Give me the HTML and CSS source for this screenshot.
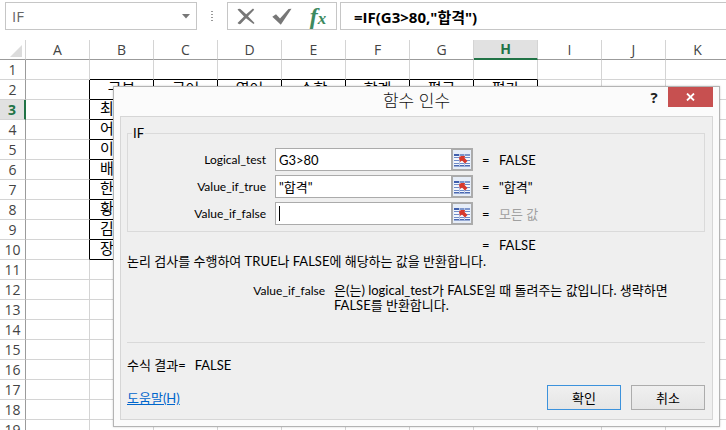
FILE: index.html
```html
<!DOCTYPE html>
<html lang="ko">
<head>
  <meta charset="UTF-8">
  <meta name="viewport" content="width=device-width, initial-scale=1.0">
  <title>함수 인수</title>
  <link rel="stylesheet" href="styles.css">
</head>
<body>
  <!-- Formula Bar -->
  <div class="formula-bar">
    <div class="name-box">
      <input type="text" value="IF" aria-label="이름 상자">
      <button type="button" aria-label="이름 목록">
        <svg width="8" height="5" viewBox="0 0 8 5"><path d="M0 0h8L4 4.500z" fill="#777"/></svg>
      </button>
    </div>
    <div class="grip"><span></span><span></span><span></span><span></span></div>
    <div class="formula-tools">
      <button type="button" aria-label="취소">
        <svg width="18" height="17" viewBox="0 0 18 17"><path d="M.500 1.500Q2.500 0 4.500 2L9.200 6.300 16 .600 17.200 1.800 11 8.200 17.500 15 16.500 16 9 10.200 3.500 16Q1.500 16.500.500 15L7 8.400z" fill="#777"/></svg>
      </button>
      <button type="button" aria-label="입력">
        <svg width="20" height="17" viewBox="0 0 20 17"><path d="M.300 8.800 4 6.200 8 10.500 16.500 1 19.500.800 8.800 16.800z" fill="#777"/></svg>
      </button>
      <button type="button" class="fx" aria-label="함수 삽입"><span class="fx-f">f</span><span class="fx-x">x</span></button>
    </div>
    <input type="text" class="formula-input" value="=IF(G3&gt;80,&quot;합격&quot;)" aria-label="수식 입력줄">
  </div>

  <!-- Sheet -->
  <div class="sheet">
    <table class="grid">
      <thead>
        <tr id="grid-head">
          <th class="corner"><svg width="12" height="12" viewBox="0 0 12 12"><path d="M12 0v12H0z" fill="#dcdcdc"/></svg></th>
        </tr>
      </thead>
      <tbody id="grid-body"></tbody>
    </table>
  </div>

  <!-- Function Arguments Dialog -->
  <form class="dialog" role="dialog" aria-labelledby="dialog-title">
    <div class="dialog-header">
      <h1 id="dialog-title">함수 인수</h1>
      <div class="window-buttons">
        <button type="button" class="help-button">?</button>
        <button type="button" class="close-button" aria-label="닫기">
          <svg width="9" height="8" viewBox="0 0 9 8"><path d="M1 .500 8 7.500M8 .500 1 7.500" stroke="#fff" stroke-width="1.800"/></svg>
        </button>
      </div>
    </div>

    <div class="dialog-body">
      <fieldset>
        <legend>IF</legend>
        <div class="arg-row">
          <label for="logical-test">Logical_test</label>
          <div class="arg-field">
            <input type="text" id="logical-test" value="G3&gt;80">
            <button type="button" aria-label="범위 선택"><svg width="16" height="14"><use href="#pick-icon"/></svg></button>
          </div>
          <span class="equals">=</span><span>FALSE</span>
        </div>
        <div class="arg-row">
          <label for="value-true">Value_if_true</label>
          <div class="arg-field">
            <input type="text" id="value-true" value="&quot;합격&quot;">
            <button type="button" aria-label="범위 선택"><svg width="16" height="14"><use href="#pick-icon"/></svg></button>
          </div>
          <span class="equals">=</span><span>"합격"</span>
        </div>
        <div class="arg-row">
          <label for="value-false">Value_if_false</label>
          <div class="arg-field">
            <span class="caret"></span>
            <input type="text" id="value-false" value="">
            <button type="button" aria-label="범위 선택"><svg width="16" height="14"><use href="#pick-icon"/></svg></button>
          </div>
          <span class="equals">=</span><span class="muted">모든 값</span>
        </div>
      </fieldset>

      <div class="arg-row total">
        <span class="equals">=</span><span>FALSE</span>
      </div>
      <p class="description">논리 검사를 수행하여 TRUE나 FALSE에 해당하는 값을 반환합니다.</p>
      <div class="arg-help">
        <span class="arg-name">Value_if_false</span>
        <p>은(는) logical_test가 FALSE일 때 돌려주는 값입니다. 생략하면 FALSE를 반환합니다.</p>
      </div>
      <hr>
      <div class="result"><span>수식 결과=</span><span>FALSE</span></div>
      <div class="dialog-footer">
        <a href="#help">도움말(H)</a>
        <div class="actions">
          <button type="button" class="primary">확인</button>
          <button type="button">취소</button>
        </div>
      </div>
    </div>
  </form>

  <!-- Range picker icon -->
  <svg class="defs" width="0" height="0">
    <symbol id="pick-icon" viewBox="0 0 16 14">
      <path d="M0 1h5v2H0z" fill="#3f5fae"/>
      <path d="M0 3h16v9H0z" fill="#f4f7fd"/>
      <path d="M6 1h10v2H6z" fill="#7d96cc"/>
      <path d="M0 4.500h16M0 7.500h16M0 10.500h16" stroke="#6f8cc9"/>
      <path d="M0 12h16v1.500H0z" fill="#4a68b2"/>
      <path d="M5.500 1v12M10.500 1v12" stroke="#b4c4e6"/>
      <path d="M5 4.500 7 3h4l-.500 2L13.500 8 11 10.500 8 7.500 6 9z" fill="#d8382c"/>
    </symbol>
  </svg>

  <script>
    const columns = ['A', 'B', 'C', 'D', 'E', 'F', 'G', 'H', 'I', 'J', 'K'];
    const subjects = ['구분', '국어', '영어', '수학', '합계', '평균', '평가'];
    const names = ['최', '어', '이', '배', '한', '황', '김', '장'];
    const head = document.getElementById('grid-head');
    const body = document.getElementById('grid-body');

    columns.forEach((name) => {
      const th = document.createElement('th');
      th.textContent = name;
      if (name === 'H') th.className = 'active-col';
      head.appendChild(th);
    });

    for (let row = 1; row <= 19; row++) {
      const tr = document.createElement('tr');
      const th = document.createElement('th');
      th.textContent = row;
      if (row === 3) th.className = 'active-row';
      tr.appendChild(th);

      columns.forEach((name, col) => {
        const td = document.createElement('td');
        const inCols = col >= 1 && col <= 7;
        // borders of B2:H10
        if (inCols && row <= 10) td.classList.add('line-bottom');
        if (col <= 7 && row >= 2 && row <= 10) td.classList.add('line-right');
        if (inCols && row === 2) td.textContent = subjects[col - 1];
        if (col === 1 && row >= 3 && row <= 10) {
          td.textContent = names[row - 3];
          td.classList.add('student');
        }
        tr.appendChild(td);
      });
      body.appendChild(tr);
    }
  </script>
</body>
</html>
```
FILE: styles.css
```css
/* General Styling */
* {
  box-sizing: border-box;
}

body {
  margin: 0;
  height: 100vh;
  overflow: hidden;
  position: relative;
  display: flex;
  flex-direction: column;
  background: #fff;
  color: #000;
  font-family: Lato, "Noto Sans CJK KR", sans-serif;
  font-size: 13px;
}

input, button {
  margin: 0;
  padding: 0;
  border: none;
  background: none;
  font: inherit;
  color: inherit;
  outline: none;
  min-width: 0;
}

button {
  display: flex;
  align-items: center;
  justify-content: center;
}

.defs {
  position: absolute;
}

/* Formula Bar */
.formula-bar {
  display: flex;
  flex: none;
  height: 40px;
  padding: 2px 0 10px 5px;
}

.name-box {
  display: flex;
  width: 192px;
  border: 1px solid #c6c6c6;
}

.name-box input {
  flex: 1;
  padding-left: 6px;
  font-family: "Open Sans", sans-serif;
  font-size: 15px;
  color: #666;
}

.name-box button {
  width: 20px;
}

.grip {
  display: flex;
  flex-direction: column;
  justify-content: center;
  align-items: center;
  gap: 2px;
  width: 30px;
}

.grip span {
  width: 2px;
  height: 1px;
  background: #999;
}

.formula-tools {
  display: flex;
  width: 110px;
  border: 1px solid #c6c6c6;
}

.formula-tools button {
  flex: 1;
}

.formula-tools .fx {
  font-family: "Liberation Serif", serif;
  font-style: italic;
  font-weight: bold;
  color: #3d8a5f;
}

.fx-f {
  font-size: 24px;
  line-height: 26px;
}

.fx-x {
  padding-top: 5px;
  font-size: 17px;
  line-height: 20px;
}

.formula-input {
  flex: 1;
  margin-left: 3px;
  padding-left: 13px;
  border: 1px solid #c6c6c6;
  border-right: none;
  font-family: "Open Sans", "Noto Sans CJK KR", sans-serif;
  font-size: 15px;
  font-weight: bold;
}

/* Sheet */
.sheet {
  flex: 1;
  overflow: hidden;
}

.grid {
  table-layout: fixed;
  width: 730px;
  min-width: 100%;
  border-collapse: separate;
  border-spacing: 0;
}

.grid th, .grid td {
  height: 20px;
  padding: 0;
  border-right: 1px solid #d4d4d4;
  border-bottom: 1px solid #d4d4d4;
  font-size: 15px;
  line-height: 19px;
  text-align: center;
  white-space: nowrap;
  overflow: hidden;
}

.grid td {
  padding-bottom: 2px;
  line-height: 17px;
}

.grid th {
  font-family: "Open Sans", sans-serif;
  font-size: 14px;
  font-weight: normal;
  color: #444;
}

.grid thead th {
  border-bottom-color: #9b9b9b;
}

.grid th:first-child {
  width: 26px;
  border-right-color: #9b9b9b;
}

.grid thead .corner {
  padding: 3px 3px 0 0;
  text-align: right;
  line-height: 12px;
  border-right-color: #d4d4d4;
}

.corner svg {
  display: inline-block;
  vertical-align: top;
}

.grid thead .active-col {
  background: #e1e1e1;
  border-bottom: 2px solid #217346;
  line-height: 18px;
  color: #217346;
  font-weight: bold;
}

.grid tbody .active-row {
  background: #e1e1e1;
  border-right: 2px solid #217346;
  color: #217346;
  font-weight: bold;
}

.grid .line-right {
  border-right-color: #000;
}

.grid .line-bottom {
  border-bottom-color: #000;
}

.grid .student {
  padding-left: 10px;
  text-align: left;
}

/* Dialog */
.dialog {
  position: absolute;
  top: 86px;
  left: 113px;
  right: 6px;
  padding: 0 6px 6px;
  border: 1px solid #b4b4b4;
  background: #fbfbfb;
  box-shadow: 0 0 2px rgba(0, 0, 0, 0.2);
}

.dialog-header {
  display: grid;
  grid-template-columns: 1fr auto 1fr;
  height: 29px;
}

.dialog-header h1 {
  grid-column: 2;
  margin: 0;
  font-size: 17px;
  font-weight: 300;
  line-height: 27px;
  color: #111;
}

.window-buttons {
  display: flex;
  justify-content: flex-end;
  height: 20px;
}

.help-button {
  width: 28px;
  font-family: "Open Sans", sans-serif;
  font-size: 15px;
  font-weight: bold;
  color: #222;
}

.close-button {
  width: 45px;
  background: #c75050;
}

.dialog-body {
  padding: 8px 7px 9px 6px;
  border: 1px solid #d6d6d6;
  background: #efefef;
}

fieldset {
  margin: 0;
  padding: 7px 0 6px;
  border: 1px solid #dadada;
}

legend {
  margin-left: 4px;
  padding: 0 1px;
  line-height: 16px;
}

.arg-row {
  display: grid;
  grid-template-columns: 138px 198px 8px 1fr;
  column-gap: 9px;
  align-items: center;
  height: 23px;
  margin-bottom: 4px;
  line-height: 18px;
}

.arg-row:last-child {
  margin-bottom: 0;
}

.arg-row label {
  font-size: 12px;
  text-align: right;
}

.arg-field {
  display: flex;
  align-items: center;
  height: 23px;
  border: 1px solid #ababab;
  background: #fff;
}

.arg-field input {
  flex: 1;
  padding-left: 3px;
}

.arg-field button {
  width: 22px;
  height: 23px;
  margin-right: -1px;
  border: 2px solid #ababab;
  background: #e6edf8;
}

.caret {
  width: 1px;
  height: 15px;
  margin-left: 3px;
  background: #000;
}

.muted {
  color: #a0a0a0;
}

.total {
  margin: 4px 0 0 1px;
  height: 18px;
}

.total .equals {
  grid-column: 3;
}

.description {
  margin: 0;
  line-height: 15px;
}

.arg-help {
  display: flex;
  gap: 9px;
  margin: 14px 0 29px;
  line-height: 15px;
}

.arg-name {
  width: 198px;
  font-size: 12px;
  text-align: right;
}

.arg-help p {
  flex: 1;
  margin: 0 24px 0 0;
}

hr {
  margin: 0 0 14px;
  border: none;
  border-top: 1px solid #d9d9d9;
}

.result {
  display: flex;
  gap: 9px;
  line-height: 16px;
}

.dialog-footer {
  display: flex;
  align-items: center;
  justify-content: space-between;
  margin-top: 12px;
}

.dialog-footer a {
  color: #0066cc;
}

.actions {
  display: flex;
  gap: 10px;
}

.actions button {
  width: 74px;
  height: 25px;
  border: 1px solid #acacac;
  background: linear-gradient(#f0f0f0, #e5e5e5);
}

.actions .primary {
  border-color: #3c92dc;
}
```
